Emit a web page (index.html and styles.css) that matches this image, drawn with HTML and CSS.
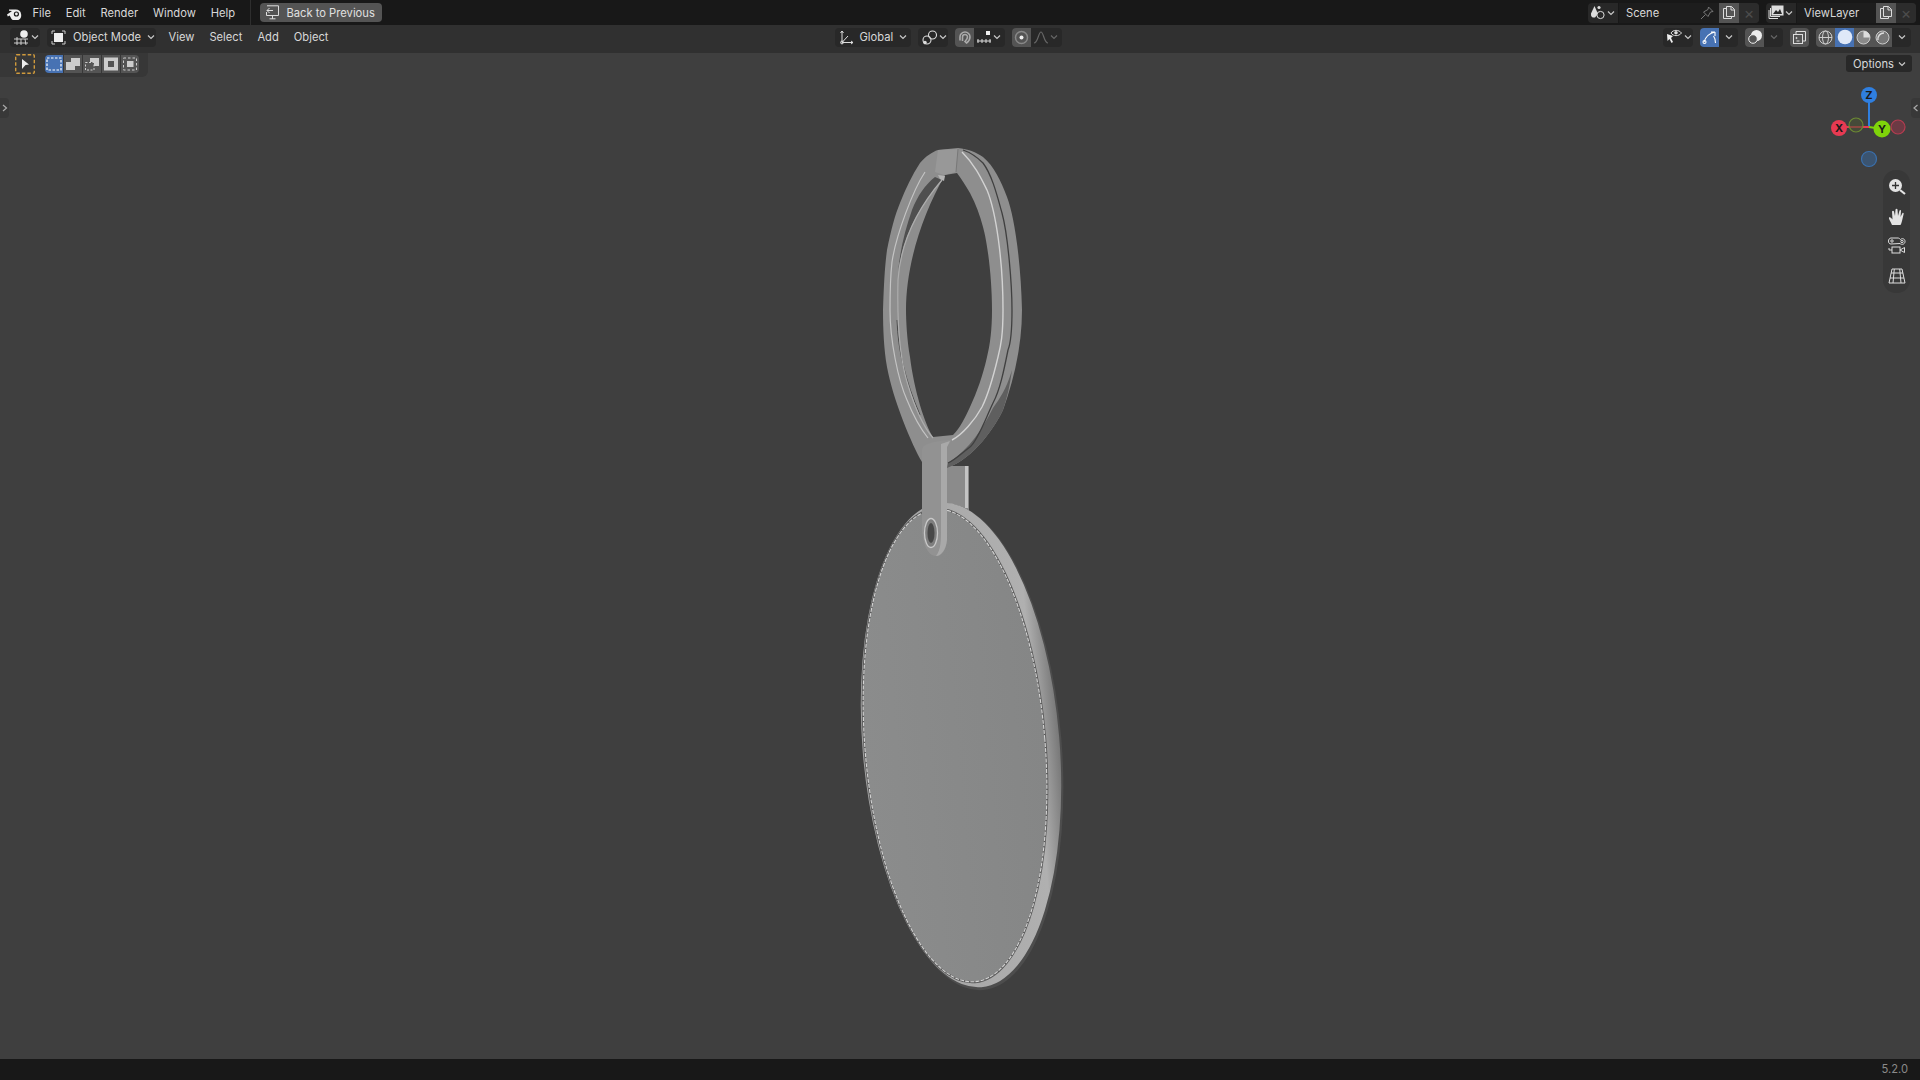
FILE: index.html
```html
<!DOCTYPE html>
<html lang="en">
<head>
    <meta charset="UTF-8">
    <title>Blender</title>
    <link rel="stylesheet" href="styles.css">
</head>
<body>
    <svg class="defs" width="0" height="0">
        <symbol id="chev" viewBox="0 0 10 10"><path d="M2 3.5 5 6.5 8 3.5" fill="none" stroke="currentColor" stroke-width="1.2"/></symbol>
    </svg>

    <div class="topbar">
        <svg class="logo" width="18" height="14" viewBox="0 0 18 14"><path d="M1 8.5 6 5 3 4.8V3.6H9.5A5.5 5.5 0 1 1 4.6 11.2L3.6 9.4 1.8 10.6Z" fill="#eee"/><circle cx="10.4" cy="8" r="2.6" fill="#181818"/><circle cx="10.4" cy="8" r="1.4" fill="#eee"/></svg>
        <nav class="menu">
            <span>File</span><span>Edit</span><span>Render</span><span>Window</span><span>Help</span>
        </nav>
        <div class="vsep"></div>
        <button class="back-btn">
            <svg width="15" height="15" viewBox="0 0 15 15" fill="none" stroke="#ddd" stroke-width="1"><path d="M2 .8H13.5V10.5H1.5V7M4.5 13.8H10.5M7.5 10.5V13.8M8 5.5H2M4.5 3 2 5.5 4.5 8"/></svg>
            Back to Previous
        </button>
        <div class="spacer"></div>
        <div class="field-group scene-group">
            <span class="fg-icon">
                <svg width="16" height="15" viewBox="0 0 16 15"><path d="M4.5 1 1 8.5C.5 12 3 13 5 12.5L8 9Z" fill="#ddd"/><circle cx="9" cy="2.5" r="1.6" fill="#ddd"/><circle cx="10.5" cy="10" r="3.6" fill="#282828" stroke="#ddd"/></svg>
                <svg class="chev" width="10" height="10"><use href="#chev"/></svg>
            </span>
            <span class="fg-name">Scene
                <svg class="pin" width="14" height="14" viewBox="0 0 14 14" fill="none" stroke="#777"><path d="M1 13 5.5 8.5M8.5 1 13 5.5 10.5 6 8 10.5 3.5 6 8 3.5Z"/></svg>
            </span>
            <span class="fg-btn"><svg width="14" height="15" viewBox="0 0 14 15" fill="none" stroke="#ddd"><path d="M4.5 11.5V1.5H9.5L12.5 4.5V11.5ZM4.5 3.5H1.5V13.5H9.5V11.5M9 1.5V5H12.5"/></svg></span>
            <span class="fg-x">&#215;</span>
        </div>
        <div class="field-group layer-group">
            <span class="fg-icon">
                <svg width="16" height="15" viewBox="0 0 16 15" fill="none" stroke="#ddd"><rect x="4" y="1" width="11" height="9" fill="#ddd"/><path d="M5 9 8 5 10 7 12 4 14 9Z" fill="#282828" stroke="none"/><path d="M2.5 3V11.5H12M1 5V13.5H10"/></svg>
                <svg class="chev" width="10" height="10"><use href="#chev"/></svg>
            </span>
            <span class="fg-name">ViewLayer</span>
            <span class="fg-btn"><svg width="14" height="15" viewBox="0 0 14 15" fill="none" stroke="#ddd"><path d="M4.5 11.5V1.5H9.5L12.5 4.5V11.5ZM4.5 3.5H1.5V13.5H9.5V11.5M9 1.5V5H12.5"/></svg></span>
            <span class="fg-x">&#215;</span>
        </div>
    </div>

    <div class="header">
        <div class="header-left">
            <button class="drop editor-btn">
                <svg width="16" height="15" viewBox="0 0 16 15" fill="none" stroke="#ddd" stroke-width=".9"><path d="M0 9H14M0 13H14M3 7V15M11 9 12 15M7 9V15"/><circle cx="10" cy="4" r="3.8" fill="#eee" stroke="none"/></svg>
                <svg class="chev" width="10" height="10"><use href="#chev"/></svg>
            </button>
            <button class="drop mode-btn">
                <svg width="15" height="15" viewBox="0 0 15 15"><rect x="3" y="3" width="9" height="9" fill="#eee"/><path d="M1 4V1H4M11 1H14V4M14 11V14H11M4 14H1V11" fill="none" stroke="#ccc"/></svg>
                <span class="mode-label">Object Mode</span>
                <svg class="chev" width="10" height="10"><use href="#chev"/></svg>
            </button>
            <nav class="menu header-menu">
                <span>View</span><span>Select</span><span>Add</span><span>Object</span>
            </nav>
        </div>
        <div class="header-center">
            <button class="drop global-btn">
                <svg width="15" height="15" viewBox="0 0 15 15" fill="none" stroke="#ddd"><path d="M3 1V12.5H14M1.5 3 3 1 4.5 3M12 11 14 12.5 12 14M3 12.5 9 6"/><circle cx="3" cy="12.5" r="1.4"/></svg>
                <span class="global-label">Global</span>
                <svg class="chev" width="10" height="10"><use href="#chev"/></svg>
            </button>
            <button class="drop pivot-btn">
                <svg width="16" height="15" viewBox="0 0 16 15" fill="none" stroke="#ddd" stroke-width="1.1"><circle cx="5" cy="10" r="4"/><circle cx="10.5" cy="5" r="4"/><circle cx="3" cy="12.5" r="1.2" fill="#ddd"/></svg>
                <svg class="chev" width="10" height="10"><use href="#chev"/></svg>
            </button>
            <div class="joined">
                <span class="ic-cell dim-cell"><svg width="15" height="15" viewBox="0 0 15 15" fill="none" stroke="#aaa" stroke-width="1.6"><path d="M3 10.5V7A5 5 0 0 1 13 7C13 10 11.5 11.5 9.5 13L8 11.5C9.5 10 10.5 9 10.5 7A2.5 2.5 0 0 0 5.5 7V11"/></svg></span>
                <span class="ic-cell snap-cell">
                    <svg width="16" height="15" viewBox="0 0 16 15" fill="none" stroke="#ddd"><path d="M1 11H15M2 9V13M6 9V13M10 9V13M14 9V13"/><rect x="10" y="1" width="4" height="4" fill="#eee" stroke="none"/></svg>
                    <svg class="chev" width="10" height="10"><use href="#chev"/></svg>
                </span>
            </div>
            <div class="joined">
                <span class="ic-cell dim-cell"><svg width="15" height="15" viewBox="0 0 15 15" fill="none" stroke="#bbb"><circle cx="7.5" cy="7.5" r="6" stroke="#888" stroke-width="1.5"/><circle cx="7.5" cy="7.5" r="2" fill="#eee" stroke="none"/></svg></span>
                <span class="ic-cell falloff-cell">
                    <svg width="16" height="15" viewBox="0 0 16 15" fill="none" stroke="#666" stroke-width="1.2"><path d="M1 13C5 13 5.5 2 8 2S11 13 15 13"/></svg>
                    <svg class="chev faded" width="10" height="10"><use href="#chev"/></svg>
                </span>
            </div>
        </div>
        <div class="header-right">
            <button class="drop vis-btn">
                <svg width="17" height="16" viewBox="0 0 17 16"><path d="M1 5 7 7 5 9 7 13 5.5 14 3.5 10 1.5 12Z" fill="#eee"/><path d="M5 4C7 .5 13 .5 15.5 4 13 7.5 7 7.5 5 4Z" fill="none" stroke="#ddd"/><circle cx="10" cy="3.8" r="1.8" fill="#ddd"/></svg>
                <svg class="chev" width="10" height="10"><use href="#chev"/></svg>
            </button>
            <div class="joined">
                <span class="ic-cell blue-cell"><svg width="16" height="16" viewBox="0 0 16 16" fill="none" stroke="#fff" stroke-width="1.1"><path d="M2 13C4 7 8 4 13 3M13 3H9M13 3V7M11.5 7C13 9 13.5 11 13.5 14"/><circle cx="2.5" cy="13" r="1.5"/></svg></span>
                <span class="ic-cell chev-cell"><svg class="chev" width="10" height="10"><use href="#chev"/></svg></span>
            </div>
            <div class="joined overlay-group">
                <span class="ic-cell dim-cell"><svg width="16" height="16" viewBox="0 0 16 16"><circle cx="9.5" cy="6.5" r="5.5" fill="#eee"/><circle cx="6" cy="10" r="4.3" fill="#555" stroke="#eee"/></svg></span>
                <span class="ic-cell chev-cell"><svg class="chev faded" width="10" height="10"><use href="#chev"/></svg></span>
            </div>
            <span class="ic-cell xray-cell"><svg width="15" height="15" viewBox="0 0 15 15" fill="none" stroke="#ddd"><rect x="1.5" y="4.5" width="9" height="9"/><path d="M4 4.5V1.5H13.5V11H10.5"/><circle cx="4.5" cy="8" r=".6" fill="#ddd"/><path d="M4.5 11H7.5"/></svg></span>
            <div class="joined shading">
                <span class="shade-cell"><svg width="15" height="15" viewBox="0 0 15 15" fill="none" stroke="#ccc"><circle cx="7.5" cy="7.5" r="6.5"/><ellipse cx="7.5" cy="7.5" rx="3" ry="6.5"/><path d="M1 7.5H14"/></svg></span>
                <span class="shade-cell active-shade"><svg width="16" height="16" viewBox="0 0 16 16"><circle cx="8" cy="8" r="7.3" fill="#dfe8f8"/></svg></span>
                <span class="shade-cell"><svg width="15" height="15" viewBox="0 0 15 15"><circle cx="7.5" cy="7.5" r="6.5" fill="#8a8a8a" stroke="#ccc"/><path d="M7.5 1A6.5 6.5 0 0 1 14 7.5H7.5Z" fill="#ddd"/></svg></span>
                <span class="shade-cell"><svg width="15" height="15" viewBox="0 0 15 15"><circle cx="7.5" cy="7.5" r="6.5" fill="#777" stroke="#ccc"/><path d="M3 10A6 6 0 0 1 9 3" fill="none" stroke="#ddd" stroke-width="1.5"/></svg></span>
                <span class="ic-cell chev-cell"><svg class="chev" width="10" height="10"><use href="#chev"/></svg></span>
            </div>
        </div>
    </div>

    <div class="viewport">
        <svg class="scene" width="1920" height="1006" viewBox="0 53 1920 1006">
            <defs>
                <linearGradient id="rim" x1="0" y1="0" x2="1" y2="0">
                    <stop offset="0" stop-color="#a2a2a2"/>
                    <stop offset=".88" stop-color="#b0b0b0"/>
                    <stop offset="1" stop-color="#787878"/>
                </linearGradient>
                <linearGradient id="face" x1="0" y1="0" x2="1" y2="0">
                    <stop offset="0" stop-color="#8b8c8c"/>
                    <stop offset="1" stop-color="#858686"/>
                </linearGradient>
            </defs>

            <!-- strap behind the ring -->
            <rect x="945" y="466" width="24" height="44" fill="#8b8b8b"/>
            <rect x="965" y="466" width="3" height="42" fill="#c4c4c4"/>

            <!-- disc -->
            <g transform="rotate(-4.8 961 745)">
                <ellipse cx="962.5" cy="747" rx="99" ry="244" fill="#4d4d4d"/>
                <ellipse cx="961" cy="745" rx="98.500" ry="243" fill="url(#rim)"/>
                <ellipse cx="955" cy="745" rx="90" ry="237" fill="url(#face)"/>
                <ellipse cx="955" cy="745" rx="90.5" ry="237.5" fill="none" stroke="#5c5c5c" stroke-width="2"/>
                <ellipse cx="955" cy="745" rx="90" ry="237" fill="none" stroke="#d4d4d4" stroke-width="1.1" stroke-dasharray="4 1.2"/>
            </g>

            <!-- ring -->
            <path d="M938 150 958 148C968 149 976 152 983 157 994 166 1001 181 1007 197 1015 218 1021 265 1022 310 1022 345 1014 380 1003 410 996 425 975 458 947 468L922 462C912 445 893 400 887 367 884 350 883 330 883 310 884 280 885 265 887 250 891 230 895 215 900 203 906 188 912 175 920 163 926 156 932 152 938 150Z" fill="#8e8e8e"/>
            <path d="M1012 370C1006 390 1000 398 993 408 983 428 970 449 948 463L947 468C975 458 996 425 1003 410 1007 398 1010 385 1012 370Z" fill="#5f5f5f"/>
            <path d="M925 172C913 190 896 235 892 262 890 280 890 295 890 310 890 340 898 380 907 400 913 415 920 428 928 438" fill="none" stroke="#c4c4c4" stroke-width="1.200"/>
            <path d="M962 152C975 165 981 178 987 190 996 212 1003 260 1003 310 1003 335 1001 345 998 357 993 378 988 395 982 407 975 420 962 435 952 440" fill="none" stroke="#d2d2d2" stroke-width="1.4"/>
            <path d="M963 150C972 153 978 158 983 163 992 175 997 195 1002 213 1008 235 1012 285 1012 310 1012 335 1010 345 1008 350 1004 370 1000 390 993 403 985 420 978 440 970 447 962 453 955 460 948 463" fill="none" stroke="#404040" stroke-width="1.3"/>
            <path d="M935 177C925 185 918 195 912 210 905 230 900 250 898 273 902 245 912 215 942 180Z" fill="#4f4f4f"/>
            <path d="M897 320C898 350 905 380 920 415" fill="none" stroke="#4a4a4a"/>
            <path d="M945 175 957 173C962 180 966 186 970 193 976 204 980 216 983 227 988 245 992 280 992 310 992 330 990 345 987 357 983 375 977 392 970 407 965 418 960 428 953 435L933 437C925 425 914 390 910 357 907 340 906 320 906 310 906 265 922 215 945 175Z" fill="#3f3f3f"/>
            <path d="M942 180C912 215 900 250 898 280 897 320 900 360 908 385 914 405 922 425 933 438" fill="none" stroke="#adadad" stroke-width="1.200"/>
            <path d="M938 150 958 149 956 172 944 175 935 172Z" fill="#989898"/>
            <path d="M958 149 956 172" stroke="#787878"/>
            <path d="M938 175 945 176 944 181 940 179Z" fill="#b4b4b4"/>

            <!-- front strap -->
            <path d="M923 447C927 442 945 440 952 440L947 447V540C946 552 940 557 935 556 928 555 923 545 922 530V450Z" fill="#929292"/>
            <path d="M941 444 950 441 947 447V540C946 550 941 556 936 556 941 550 941 540 941 530Z" fill="#a9a9a9"/>
            <ellipse cx="931" cy="533" rx="6.5" ry="14.5" fill="#7e7e7e" stroke="#c9c9c9" stroke-width="1.3"/>
            <ellipse cx="931" cy="533" rx="3.5" ry="10" fill="#484848"/>
        </svg>

        <div class="tool-settings">
            <span class="tool-icon">
                <svg width="20" height="20" viewBox="0 0 20 20"><rect x=".7" y=".7" width="18.6" height="18.6" rx="1" fill="none" stroke="#d09a3c" stroke-width="1.4" stroke-dasharray="3.5 2"/><path d="M7 5 14 10.5 10.5 11 7 15Z" fill="#eee"/></svg>
            </span>
            <div class="sel-modes">
                <span class="sel-mode sel-on"><svg width="16" height="16" viewBox="0 0 16 16"><rect x="1" y="2" width="14" height="12" fill="none" stroke="#fff" stroke-width="1.2" stroke-dasharray="2.5 1.5"/></svg></span>
                <span class="sel-mode"><svg width="16" height="16" viewBox="0 0 16 16"><path d="M6 2H15V10H10V14H1V6H6Z" fill="#ccc"/></svg></span>
                <span class="sel-mode"><svg width="16" height="16" viewBox="0 0 16 16"><path d="M6 2H15V10H10V6H6Z" fill="#ccc"/><rect x="1.5" y="6.5" width="8.5" height="7.5" fill="none" stroke="#ccc" stroke-dasharray="2 1.5"/></svg></span>
                <span class="sel-mode"><svg width="16" height="16" viewBox="0 0 16 16"><path d="M1 1.5H15V14.5H1ZM5 5V11H11V5Z" fill="#ccc" fill-rule="evenodd"/></svg></span>
                <span class="sel-mode"><svg width="16" height="16" viewBox="0 0 16 16"><rect x="5" y="5" width="6.5" height="6" fill="#ccc"/><rect x="1.5" y="2" width="13" height="12" fill="none" stroke="#ccc" stroke-dasharray="2.5 2"/></svg></span>
            </div>
        </div>

        <button class="options-btn">Options <svg class="chev" width="10" height="10"><use href="#chev"/></svg></button>

        <span class="side-tab tab-left"><svg width="8" height="10" viewBox="0 0 8 10"><path d="M2 2 5.5 5 2 8" fill="none" stroke="#aaa" stroke-width="1.2"/></svg></span>
        <span class="side-tab tab-right"><svg width="8" height="10" viewBox="0 0 8 10"><path d="M5.5 2 2 5 5.5 8" fill="none" stroke="#aaa" stroke-width="1.2"/></svg></span>

        <svg class="gizmo" width="80" height="110" viewBox="1830 84 80 110">
            <path d="M1869 127V95" stroke="#2f7fe0" stroke-width="2"/>
            <path d="M1869 127H1839" stroke="#e83a52" stroke-width="2"/>
            <path d="M1869 127 1882 129" stroke="#7fd40a" stroke-width="2"/>
            <circle cx="1856" cy="125" r="7" fill="#4a5236" fill-opacity=".6" stroke="#6c8a33" stroke-width="1.2"/>
            <circle cx="1898" cy="127" r="7" fill="#6c3a44" stroke="#b53c50" stroke-width="1.2"/>
            <circle cx="1869" cy="159" r="7.5" fill="#3b5470" stroke="#3a70ae" stroke-width="1.2"/>
            <circle cx="1869" cy="95" r="8" fill="#2f7fe0"/>
            <circle cx="1839" cy="128" r="8" fill="#e83a52"/>
            <circle cx="1882" cy="129" r="8.5" fill="#7fd40a"/>
            <text x="1869" y="99" class="axis">Z</text>
            <text x="1839" y="132" class="axis">X</text>
            <text x="1882" y="133" class="axis">Y</text>
        </svg>

        <div class="nav-pill">
            <svg width="18" height="18" viewBox="0 0 18 18"><circle cx="7.5" cy="7.5" r="6.5" fill="#e4e4e4"/><path d="M7.5 4V11M4 7.5H11" stroke="#333" stroke-width="1.3"/><path d="M12 12 17 16" stroke="#e4e4e4" stroke-width="2.2"/></svg>
            <svg width="18" height="18" viewBox="0 0 18 18"><path d="M4 17C3 14 .5 11 1 9.5 2 8.5 3.5 10 4.5 11.5L4 3.5C4.5 2.5 5.5 2.5 6 3.5L7 8 7.5 1.5C8 .5 9.2 .5 9.5 1.5L10 8 11.5 2.5C12 1.5 13 2 13 3L12.5 9 14.5 5C15.5 4.5 16 5.5 15.5 6.5L14 13C13.5 15 13 16 12.5 17Z" fill="#e4e4e4"/></svg>
            <svg width="18" height="18" viewBox="0 0 18 18" fill="none" stroke="#ddd"><path d="M3 1H10C11 1 12 2 12.5 2.5 14 1 17 1.5 17 4.5S13.5 8 12 6.5L3 7C1 7 .5 5.5 .5 4S1.5 1 3 1Z"/><circle cx="4" cy="4" r="1.2"/><circle cx="14" cy="4.5" r="1.2"/><rect x="4" y="10" width="8" height="6"/><path d="M12 13 16.5 10.5V15.5ZM1 13H4M1 11V13"/></svg>
            <svg width="18" height="18" viewBox="0 0 18 18" fill="none" stroke="#ddd"><path d="M4 2H14L17 16H1ZM6.3 2 5 16M11.7 2 13 16M3 6H15M2 11H16"/></svg>
        </div>
    </div>

    <div class="statusbar">5.2.0</div>
</body>
</html>
```
FILE: styles.css
```css
* {
    box-sizing: border-box;
}
html, body {
    height: 100%;
}
body {
    margin: 0;
    display: flex;
    flex-direction: column;
    overflow: hidden;
    font-family: "Inter", "Liberation Sans", sans-serif;
    font-size: 11.2px;
    color: #d8d8d8;
    background-color: #3f3f3f;
}
svg {
    display: block;
    flex: none;
}
button {
    font: inherit;
    color: inherit;
    border: none;
    padding: 0;
}
.defs {
    position: absolute;
}
.chev {
    color: #c8c8c8;
}
.chev.faded {
    color: #666;
}

/* top bar */
.topbar {
    height: 25px;
    flex: none;
    display: flex;
    align-items: center;
    padding: 0 4px 0 6px;
    background-color: #181818;
}
.logo {
    margin-right: 1px;
}
.menu {
    display: flex;
}
.menu span {
    padding: 0 7.4px;
    white-space: nowrap;
}
.vsep {
    width: 1px;
    height: 25px;
    margin-left: 8px;
    background-color: #2e2e2e;
}
.back-btn {
    display: flex;
    align-items: center;
    gap: 6px;
    height: 19px;
    width: 122px;
    margin-left: 9px;
    padding: 0 0 0 5px;
    background-color: #545454;
    border-radius: 4px;
    color: #e0e0e0;
}
.spacer {
    flex: 1;
}
.field-group {
    display: flex;
    height: 20px;
    background-color: #282828;
    border-radius: 4px;
    overflow: hidden;
}
.scene-group {
    width: 171px;
    margin-right: 7px;
}
.layer-group {
    width: 150px;
}
.fg-icon {
    width: 31px;
    display: flex;
    align-items: center;
    justify-content: center;
    flex: none;
    border-right: 1px solid #181818;
}
.fg-name {
    flex: 1;
    display: flex;
    align-items: center;
    justify-content: space-between;
    padding: 0 5px 0 7px;
    background-color: #1d1d1d;
}
.fg-btn {
    width: 20px;
    display: flex;
    align-items: center;
    justify-content: center;
    background-color: #545454;
}
.fg-x {
    width: 20px;
    text-align: center;
    font-size: 16px;
    line-height: 20px;
    color: #4d4d4d;
    background-color: #2c2c2c;
}

/* 3d view header */
.header {
    height: 28px;
    flex: none;
    display: grid;
    grid-template-columns: 1fr auto 1fr;
    align-items: center;
    padding: 0 9px 4px 10px;
    background-color: #303030;
}
.header-left,
.header-center,
.header-right {
    display: flex;
    align-items: center;
}
.header-center {
    gap: 7px;
    margin-right: 25px;
}
.header-right {
    justify-content: flex-end;
}
.drop {
    display: flex;
    align-items: center;
    height: 19px;
    background-color: #282828;
    border-radius: 4px;
}
.editor-btn {
    width: 30px;
    padding-left: 4px;
    margin-right: 7px;
}
.mode-btn {
    width: 109px;
    padding-left: 4px;
}
.mode-label {
    flex: 1;
    text-align: left;
    margin-left: 7px;
}
.header-menu {
    margin-left: 5px;
}
.header-menu span {
    padding: 0 7.5px;
}
.global-btn {
    width: 76px;
    padding: 0 3px 0 4px;
}
.global-label {
    flex: 1;
    text-align: left;
    margin-left: 6px;
}
.pivot-btn {
    width: 30px;
    padding-left: 4px;
}
.joined {
    display: flex;
    height: 19px;
    background-color: #282828;
    border-radius: 4px;
    overflow: hidden;
}
.ic-cell {
    display: flex;
    align-items: center;
    justify-content: center;
    height: 19px;
}
.dim-cell {
    width: 19px;
    background-color: #545454;
}
.snap-cell {
    width: 31px;
}
.falloff-cell {
    width: 31px;
}
.vis-btn {
    width: 30px;
    padding-left: 3px;
    margin-right: 7px;
}
.blue-cell {
    width: 19px;
    background-color: #4772b3;
}
.chev-cell {
    width: 19px;
}
.overlay-group {
    margin-left: 7px;
}
.xray-cell {
    width: 19px;
    margin-left: 7px;
    margin-right: 7px;
    background-color: #545454;
    border-radius: 4px;
}
.shade-cell {
    width: 19px;
    display: flex;
    align-items: center;
    justify-content: center;
    background-color: #545454;
}
.active-shade {
    background-color: #4772b3;
}

/* viewport */
.viewport {
    flex: 1;
    position: relative;
    background-color: #3f3f3f;
}
.scene {
    position: absolute;
    left: 0;
    top: 0;
}
.tool-settings {
    position: relative;
    display: flex;
    align-items: center;
    width: 148px;
    height: 24px;
    padding: 0 0 2px 15px;
    background-color: #373737;
    border-bottom-right-radius: 6px;
}
.tool-icon {
    margin-right: 10px;
}
.sel-modes {
    display: flex;
    gap: 1px;
    border-radius: 4px;
    overflow: hidden;
}
.sel-mode {
    width: 18px;
    height: 18px;
    display: flex;
    align-items: center;
    justify-content: center;
    background-color: #545454;
}
.sel-on {
    background-color: #4772b3;
}
.options-btn {
    position: absolute;
    top: 2px;
    right: 8px;
    display: flex;
    align-items: center;
    gap: 3px;
    width: 66px;
    height: 17px;
    padding-left: 7px;
    background-color: #282828;
    border-radius: 3px;
}
.side-tab {
    position: absolute;
    top: 45px;
    width: 9px;
    height: 20px;
    display: flex;
    align-items: center;
    justify-content: center;
    background-color: #383838;
}
.tab-left {
    left: 0;
    border-radius: 0 4px 4px 0;
}
.tab-right {
    right: 0;
    border-radius: 4px 0 0 4px;
}
.gizmo {
    position: absolute;
    left: 1830px;
    top: 31px;
}
.axis {
    font-family: "Inter", "Liberation Sans", sans-serif;
    font-size: 11px;
    font-weight: 700;
    fill: #1a1a1a;
    text-anchor: middle;
}
.nav-pill {
    position: absolute;
    left: 1883px;
    top: 117px;
    width: 27px;
    height: 123px;
    padding: 8px 0;
    display: flex;
    flex-direction: column;
    align-items: center;
    justify-content: space-between;
    background-color: #383838;
    border-radius: 13px;
}

/* status bar */
.statusbar {
    height: 21px;
    flex: none;
    padding-right: 12px;
    text-align: right;
    line-height: 21px;
    color: #8a8a8a;
    background-color: #181818;
}
```
